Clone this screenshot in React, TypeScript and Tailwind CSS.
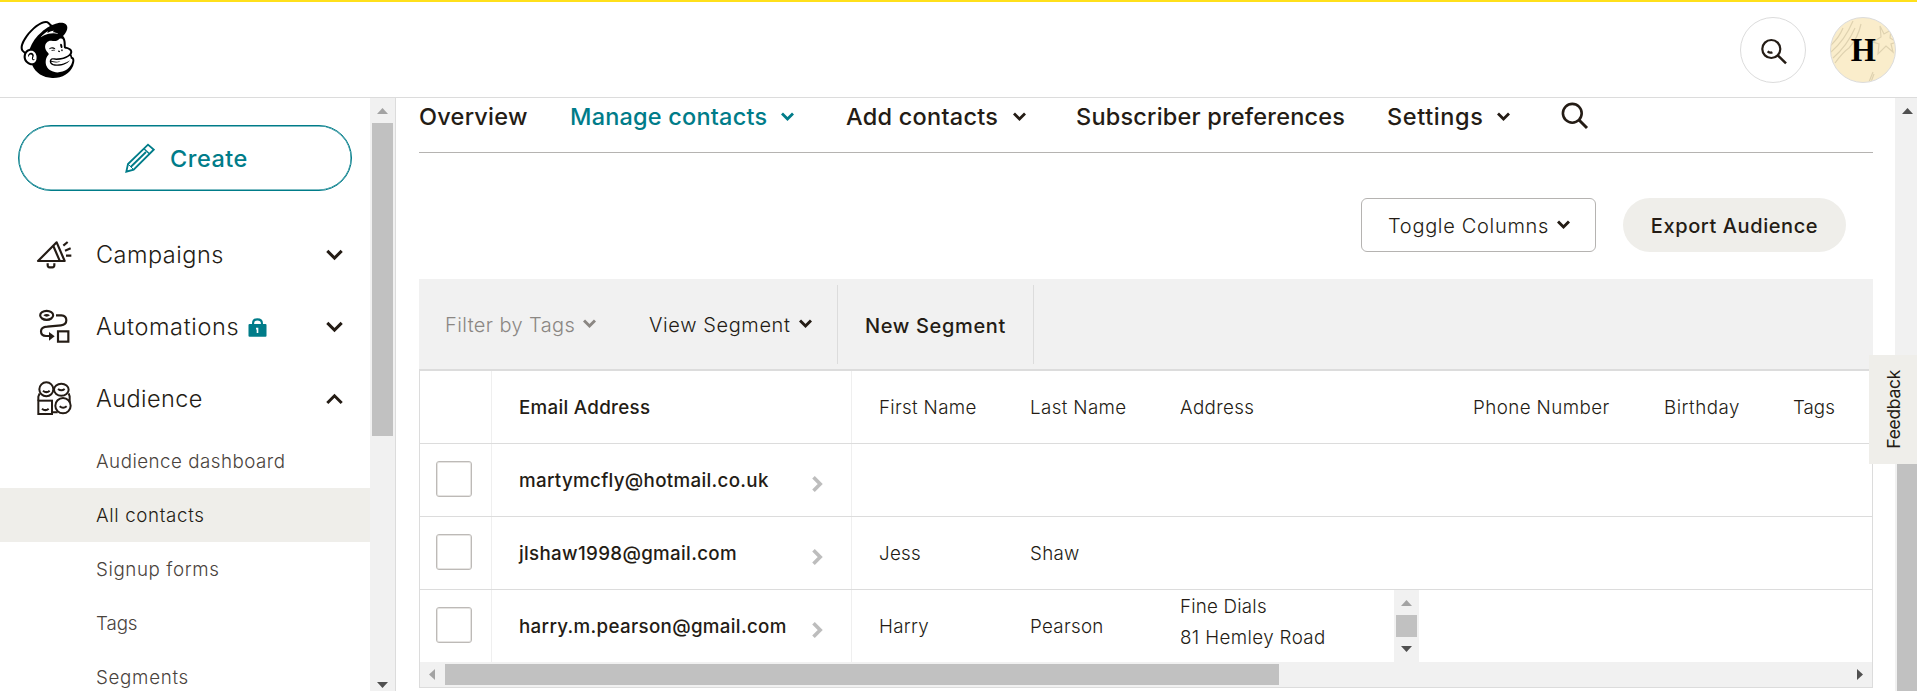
import type { ReactNode } from "react";
import { SiMailchimp } from "react-icons/si";

function Chevron({ className = "", width = 13, stroke = 2.8 }: { className?: string; width?: number; stroke?: number }) {
  return (
    <svg className={className} width={width} height={width * 0.7} viewBox="0 0 13 9" fill="none" stroke="currentColor" strokeWidth={stroke}>
      <path d="M1 1.4 6.5 6.9 12 1.4" />
    </svg>
  );
}

function Arrow({ dir, dim = false }: { dir: "up" | "down" | "left" | "right"; dim?: boolean }) {
  const paths = { up: "M0 6 5.5 0 11 6Z", down: "M0 0H11L5.5 6Z", left: "M6 0V11L0 5.5Z", right: "M0 0V11L6 5.5Z" };
  const vertical = dir === "up" || dir === "down";
  return (
    <svg width={vertical ? 11 : 6} height={vertical ? 6 : 11} className={dim ? "shrink-0 fill-[#a3a3a3]" : "shrink-0 fill-[#505050]"}>
      <path d={paths[dir]} />
    </svg>
  );
}

function CampaignsIcon() {
  return (
    <svg width="36" height="30" viewBox="108 90 108 90" fill="none" stroke="#241c15" strokeWidth="6.5">
      <path d="M114 153 170 97 194 153Z" strokeLinejoin="round" />
      <path d="M160 108 179 152M190 107 203 96M195 122 212 115M198 137H214" />
      <path d="M143 160V166Q143 172 149 172H157Q163 172 163 166V160" />
    </svg>
  );
}

function AutomationsIcon() {
  return (
    <svg width="36" height="36" viewBox="108 297 108 108" fill="none" stroke="#241c15" strokeWidth="6.5">
      <ellipse cx="140" cy="316" rx="19.5" ry="13.5" />
      <path d="M130 316Q140 308 150 316 140 324 130 316Z" fill="#241c15" stroke="none" />
      <path d="M168 316H184Q199 317 199 331 199 345 183 346L142 350Q123 351 123 364 123 378 138 378H150" />
      <path d="M147 366 164 379 147 392Z" fill="#241c15" stroke="none" />
      <rect x="174" y="364" width="31" height="31" />
    </svg>
  );
}

function AudienceIcon() {
  return (
    <svg width="36" height="36" viewBox="108 510 108 108" fill="none" stroke="#241c15" strokeWidth="6">
      <circle cx="139" cy="535" r="21" />
      <ellipse cx="184" cy="536" rx="22" ry="18" />
      <rect x="115" y="569" width="41" height="40" />
      <circle cx="189" cy="584" r="23" />
      <path d="M119 547 115 557V569M206 547 209 556V574M157 604H173" />
      <path d="M129 539Q139 548 149 539M174 534Q184 542 194 534M126 593Q136 602 146 593M179 586Q189 595 200 586" />
    </svg>
  );
}

function LockIcon() {
  return (
    <svg width="19" height="19" viewBox="747 320 57 58" fill="none">
      <path d="M762 342V336Q762 324 775 324 789 324 789 336V342" stroke="#007c89" strokeWidth="6.5" />
      <rect x="748" y="338" width="55" height="39" rx="3" fill="#007c89" />
      <path d="M771 350H778V366H773V355H771Z" fill="#fff" />
    </svg>
  );
}

function PencilIcon() {
  return (
    <svg width="30" height="30" viewBox="375 429 90 90" fill="none" stroke="#007c89" strokeWidth="5.5">
      <path d="M379 515 384 492 444 434 461 449 401 509Z" />
      <path d="M432 446 449 462" strokeWidth="4" />
      <path d="M392 501 438 456" strokeWidth="5.5" />
      <path d="M384 492 401 509" strokeWidth="3" />
    </svg>
  );
}

const groups: { label: string; icon: ReactNode; track: string; open?: boolean; lock?: boolean; chev: string }[] = [
  { label: "Campaigns", icon: <CampaignsIcon />, track: "tracking-[0.49px]", chev: "" },
  { label: "Automations", icon: <AutomationsIcon />, track: "tracking-[0.64px]", lock: true, chev: "" },
  { label: "Audience", icon: <AudienceIcon />, track: "tracking-[0.42px]", open: true, chev: "rotate-180" },
];

const subItems = [
  { label: "Audience dashboard", cls: "tracking-[0.48px] text-[#4a433d]" },
  { label: "All contacts", cls: "tracking-[0.64px] bg-[#efeeea] text-[#241c15]" },
  { label: "Signup forms", cls: "tracking-[0.6px] text-[#4a433d]" },
  { label: "Tags", cls: "tracking-[-0.1px] text-[#4a433d]" },
  { label: "Segments", cls: "tracking-[0.7px] text-[#4a433d]" },
];

function Sidebar() {
  return (
    <aside className="flex h-full w-[396px] shrink-0 border-r border-[#dcdcdc]">
      <div className="w-[370px] overflow-hidden">
        <div className="px-[18px] pt-[27px]">
          <button className="flex h-[66px] w-full items-center rounded-full border border-[#007c89] pl-[106px] text-[23.5px] font-medium tracking-[0.5px] text-[#007c89] shadow-[inset_0_0_0_0.5px_#007c89]">
            <PencilIcon />
            <span className="mt-px ml-[15px]">Create</span>
          </button>
        </div>
        <nav className="pt-7">
          {groups.map((g) => (
            <div key={g.label} className={`flex items-center pl-9 text-[23.5px] font-light text-[#241c15] ${g.open ? "h-[71px]" : "h-[72px]"}`}>
              <span className="flex w-[60px]">{g.icon}</span>
              <span className={g.track}>{g.label}</span>
              {g.lock && <span className="ml-[9px]"><LockIcon /></span>}
              <Chevron className={`mr-[27.5px] ml-auto ${g.chev}`} width={17} stroke={2.3} />
            </div>
          ))}
          {subItems.map((s) => (
            <div key={s.label} className={`flex h-[54px] items-center pt-[2px] pl-[96px] text-[18.75px] font-light ${s.cls}`}>
              {s.label}
            </div>
          ))}
        </nav>
      </div>
      <div className="flex w-[25px] flex-col items-center bg-[#f1f1f1] pt-[10px] pb-[3px]">
        <Arrow dir="up" dim />
        <div className="mt-[9px] h-[313px] w-[21px] bg-[#c1c1c1]" />
        <div className="mt-auto"><Arrow dir="down" /></div>
      </div>
    </aside>
  );
}

function Header() {
  return (
    <header className="flex h-[98px] items-center border-t-2 border-b border-t-[#ffe01b] border-b-[#dcdcdc] pr-[21px] pl-[19px]">
      <SiMailchimp size={57} className="text-black" />
      <div className="ml-auto flex gap-6">
        <div className="flex size-[66px] items-center justify-center rounded-full border border-[#dcdcdc]">
          <svg width="30" height="30" viewBox="0 0 30 30" fill="none" stroke="#241c15" strokeWidth="2.2">
            <circle cx="13.3" cy="14" r="9" />
            <path d="M19.8 20.4 28 28.4" strokeWidth="2.5" />
            <path d="M9.6 16.4Q12 18.4 14.4 17.2" />
          </svg>
        </div>
        <div className="relative flex size-[66px] items-center justify-center overflow-hidden rounded-full border border-[#dcdcdc] bg-[#faedcb]">
          <svg className="absolute inset-0" width="64" height="64" viewBox="0 0 64 64" fill="none" stroke="#dfd2b0" strokeWidth="1.2">
            <path d="M0 34Q14 22 22 3M2 40Q16 28 24 10M4 45Q12 34 18 30 27 20 30 6M-1 28Q8 20 12 10M38 64 42 54M40 64 43 56" />
            <path d="M49 8 53 16 60 12 59 20 66 24 60 26 62 34 55 28 47 36 48 26 42 24 50 19Z" />
          </svg>
          <span className="relative scale-x-95 font-['Liberation_Serif',serif] text-[34px] leading-none font-bold text-black">H</span>
        </div>
      </div>
    </header>
  );
}

function Tabs() {
  return (
    <div className="flex h-[55px] shrink-0 items-center border-b border-[#b5b3b1] pb-[17px] text-[23.5px] leading-none font-medium text-[#241c15]">
      <span className="w-[151px] tracking-[0.25px]">Overview</span>
      <span className="flex w-[276px] items-center text-[#007c89]">
        <span className="w-[211px] tracking-[0.2px]">Manage contacts</span>
        <Chevron />
      </span>
      <span className="flex w-[230px] items-center">
        <span className="w-[167px] tracking-[0.25px]">Add contacts</span>
        <Chevron />
      </span>
      <span className="w-[311px] tracking-[0.2px]">Subscriber preferences</span>
      <span className="flex w-[174px] items-center">
        <span className="w-[110px] tracking-[0.6px]">Settings</span>
        <Chevron />
      </span>
      <svg width="28" height="28" viewBox="0 0 28 28" fill="none" stroke="#241c15" strokeWidth="2.6" className="-mt-px">
        <circle cx="11.3" cy="11.3" r="9.4" />
        <path d="M18 18 26 26" strokeWidth="3" />
      </svg>
    </div>
  );
}

function Actions() {
  return (
    <div className="flex h-[126px] shrink-0 items-center justify-end gap-[27px] pt-[18px] pr-[27px] text-[20px] text-[#241c15]">
      <button className="flex h-[54px] w-[235px] items-center rounded-[6px] border border-[#b5b3b1] pl-[26px] font-light tracking-[0.69px]">
        <span className="w-[169px] pt-[2px] text-left">Toggle Columns</span>
        <Chevron stroke={3} />
      </button>
      <button className="h-[54px] w-[223px] rounded-full bg-[#efeeea] pt-px font-medium tracking-[0.59px]">Export Audience</button>
    </div>
  );
}

function FilterBar() {
  return (
    <div className="flex h-[92px] shrink-0 items-center border-b-2 border-[#dcdcdc] bg-[#f1f1f1] text-[20px] text-[#241c15]">
      <span className="flex w-[230px] items-center pl-[26px] font-light tracking-[0.4px] text-[#8b8783]">
        <span className="w-[138px] pt-px">Filter by Tags</span>
        <Chevron stroke={3} />
      </span>
      <span className="flex h-[79px] w-[189px] items-center border-r border-[#dcdcdc] font-light tracking-[0.6px]">
        <span className="w-[150px] pt-px">View Segment</span>
        <Chevron stroke={3} />
      </span>
      <span className="flex h-[79px] w-[196px] items-center border-r border-[#dcdcdc] pt-[3px] pl-[27px] font-medium tracking-[0.64px]">New Segment</span>
    </div>
  );
}

const rows = [
  { email: "martymcfly@hotmail.co.uk", first: "", last: "", address: false },
  { email: "jlshaw1998@gmail.com", first: "Jess", last: "Shaw", address: false },
  { email: "harry.m.pearson@gmail.com", first: "Harry", last: "Pearson", address: true },
];

const gridCols = "grid grid-cols-[72px_360px_152px_150px_293px_191px_129px_105px]";

function ContactsTable() {
  return (
    <div className="flex h-[317px] shrink-0 flex-col overflow-hidden border-x border-b border-[#dcdcdc] text-[18.75px] font-light text-[#241c15]">
      <div className={`${gridCols} h-[73px] border-b border-[#dcdcdc]`}>
        <div className="border-r border-[#efefef]" />
        <div className="flex items-center border-r border-[#efefef] pt-[2px] pl-[27px] font-medium tracking-[0.3px]">Email Address</div>
        <div className="flex items-center pt-[2px] pl-[27px] tracking-[0.32px]">First Name</div>
        <div className="flex items-center pt-[2px] pl-[26px] tracking-[0.38px]">Last Name</div>
        <div className="flex items-center pt-[2px] pl-[26px] tracking-[0.36px]">Address</div>
        <div className="flex items-center pt-[2px] pl-[26px] tracking-[0.42px]">Phone Number</div>
        <div className="flex items-center pt-[2px] pl-[26px] tracking-[0.5px]">Birthday</div>
        <div className="flex items-center pt-[2px] pl-[26px]">Tags</div>
      </div>
      {rows.map((r) => (
        <div key={r.email} className={`${gridCols} ${r.address ? "h-[72px]" : "h-[73px] border-b border-[#dcdcdc]"}`}>
          <div className="border-r border-[#efefef] pt-[17px] pl-4">
            <div className="size-9 rounded-[3px] border border-[#bdbab7] shadow-[inset_0_0_0_1px_#e6e4e2]" />
          </div>
          <div className="flex items-center justify-between border-r border-[#efefef] pr-7 pl-[27px] font-medium tracking-[0.32px]">
            <span className="pt-[3px]">{r.email}</span>
            <svg width="11" height="16" viewBox="0 0 11 16" className="mt-2" fill="none" stroke="#bdbdbd" strokeWidth="3.6">
              <path d="M1.5 1.3 8.2 8 1.5 14.7" />
            </svg>
          </div>
          <div className="flex items-center pt-[3px] pl-[27px] tracking-[0.3px]">{r.first}</div>
          <div className="flex items-center pt-[3px] pl-[26px] tracking-[0.3px]">{r.last}</div>
          {r.address && (
            <div className="flex pl-[26px]">
              <div className="w-[214px] pt-px leading-[31px]">
                <p className="tracking-[0.2px]">Fine Dials</p>
                <p className="tracking-[0.38px]">81 Hemley Road</p>
              </div>
              <div className="flex w-[25px] flex-col items-center bg-[#f1f1f1] pt-[10px]">
                <Arrow dir="up" dim />
                <div className="mt-[9px] mb-[9px] h-[22px] w-[21px] bg-[#c1c1c1]" />
                <Arrow dir="down" />
              </div>
            </div>
          )}
        </div>
      ))}
      <div className="flex h-[25px] items-center bg-[#f1f1f1] px-[9px]">
        <Arrow dir="left" dim />
        <div className="ml-[10px] h-[21px] w-[834px] bg-[#c1c1c1]" />
        <div className="ml-auto"><Arrow dir="right" /></div>
      </div>
    </div>
  );
}

export default function App() {
  return (
    <div className="relative h-[691px] w-[1917px] overflow-hidden bg-white font-['Inter','Liberation_Sans',sans-serif]">
      <Header />
      <div className="flex h-[593px]">
        <Sidebar />
        <main className="flex h-full min-w-0 flex-1 flex-col overflow-hidden pr-[22px] pl-[23px]">
          <Tabs />
          <Actions />
          <FilterBar />
          <ContactsTable />
        </main>
        <div className="flex w-[22px] shrink-0 flex-col items-end bg-[#f1f1f1] pt-[10px]">
          <div className="mr-1"><Arrow dir="up" /></div>
          <div className="mt-[266px] w-5 flex-1 bg-[#c1c1c1]" />
        </div>
      </div>
      <button className="absolute top-[355px] right-0 flex h-[109px] w-12 items-center justify-center bg-[#efeeea] pl-[2px]">
        <span className="rotate-180 text-[17.5px] leading-none tracking-[-0.3px] text-[#241c15] [writing-mode:vertical-rl]">Feedback</span>
      </button>
    </div>
  );
}
